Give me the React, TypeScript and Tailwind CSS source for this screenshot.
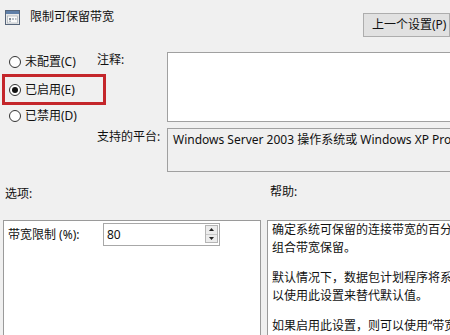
import React from "react";

const Radio = ({ checked, label }: { checked?: boolean; label: string }) => (
  <div className="flex items-center h-[26px] pl-[9px]">
    <span className="w-[12px] h-[12px] rounded-full border border-[#333] bg-white flex items-center justify-center shrink-0">
      {checked && <span className="w-[6px] h-[6px] rounded-full bg-[#111]" />}
    </span>
    <span className="ml-[4px] text-[#111] whitespace-nowrap">{label}</span>
  </div>
);

export default function App() {
  return (
    <div
      className="w-[450px] h-[335px] overflow-hidden bg-[#f0f0f0] text-[12px] leading-[16px] text-[#1a1a1a]"
      style={{ fontFamily: '"Noto Sans", "Noto Sans CJK SC", sans-serif' }}
    >
      {/* header */}
      <div className="flex h-[52px]">
        <div className="flex items-start pt-[10px] pl-[5px]">
          <svg width="15" height="15" viewBox="0 0 15 15" className="shrink-0">
            <rect x="0.5" y="0.5" width="14" height="14" fill="#e8e8e8" stroke="#56657a" />
            <rect x="1" y="1" width="13" height="3" fill="#5f7fa8" />
            <rect x="2.5" y="6" width="10" height="7" fill="#fafafa" stroke="#9aa3ad" strokeWidth="0.6" />
            <rect x="4" y="8" width="2" height="2" fill="#7f8b98" />
            <rect x="7" y="8" width="2" height="2" fill="#b7bec6" />
            <rect x="10" y="8" width="1.5" height="2" fill="#b7bec6" />
            <rect x="4" y="10.5" width="2" height="1.5" fill="#b7bec6" />
          </svg>
          <span className="ml-[10px] mt-[-1px] text-[#111]">限制可保留带宽</span>
        </div>
        <div className="ml-auto pt-[13px] shrink-0">
          <div className="w-[87px] h-[24px] bg-[#e1e1e1] border border-[#adadad] flex items-center pl-[8px] whitespace-nowrap text-[#111]">
            上一个设置(P)
          </div>
        </div>
      </div>

      {/* main settings */}
      <div className="relative flex">
        <div className="w-[97px] shrink-0 flex flex-col mt-[-3px]">
          <Radio label="未配置(C)" />
          <div className="h-[2px]" />
          <Radio checked label="已启用(E)" />
          <Radio label="已禁用(D)" />
        </div>
        <div className="flex flex-col shrink-0">
          <div className="flex">
            <div className="w-[70px] shrink-0 text-[#111]">注释:</div>
            <div className="w-[300px] shrink-0 h-[70px] bg-white border border-[#a0a0a0]" />
          </div>
          <div className="flex mt-[6px]">
            <div className="w-[70px] shrink-0 pt-[1px] text-[#111] whitespace-nowrap">支持的平台:</div>
            <div className="w-[300px] shrink-0 h-[44px] bg-[#f0f0f0] border border-[#a0a0a0] pl-[5px] pt-[3px] whitespace-nowrap overflow-hidden text-[#111]">
              Windows Server 2003 操作系统或 Windows XP Pro
            </div>
          </div>
        </div>
        <div className="absolute left-[2px] top-[22px] w-[104px] h-[31px] border-[3px] border-[#c4262b]" />
      </div>

      {/* section labels */}
      <div className="flex mt-[14px] h-[16px]">
        <div className="w-[267px] shrink-0 pl-[5px] text-[#111]">选项:</div>
        <div className="pl-[3px] mt-[-2px] text-[#111]">帮助:</div>
      </div>

      {/* panels */}
      <div className="flex mt-[18px] pl-[3px]">
        <div className="w-[258px] shrink-0 h-[140px] bg-white border border-[#9a9a9a] pl-[4px] pt-[2px]">
          <div className="flex items-center">
            <div className="w-[95px] shrink-0 text-[#111] whitespace-nowrap">带宽限制 (%):</div>
            <div className="w-[117px] shrink-0 h-[23px] border border-[#a8a8a8] bg-white flex items-center relative">
              <span className="pl-[3px] text-[#111]">80</span>
              <div className="absolute right-[1px] top-[1px] w-[13px] h-[18px] flex flex-col border border-[#b5b5b5] bg-[#ececec]">
                <div className="flex-1 flex items-center justify-center border-b border-[#c8c8c8]">
                  <svg width="5" height="3" viewBox="0 0 5 3"><path d="M0 3 L2.5 0 L5 3 Z" fill="#222" /></svg>
                </div>
                <div className="flex-1 flex items-center justify-center">
                  <svg width="5" height="3" viewBox="0 0 5 3"><path d="M0 0 L2.5 3 L5 0 Z" fill="#222" /></svg>
                </div>
              </div>
            </div>
          </div>
        </div>
        <div className="ml-[6px] w-[200px] shrink-0 h-[140px] bg-white border border-[#9a9a9a] pl-[4px] leading-[18px] whitespace-nowrap overflow-hidden text-[#111]">
          <div>确定系统可保留的连接带宽的百分比</div>
          <div className="mb-[12px]">组合带宽保留。</div>
          <div>默认情况下，数据包计划程序将系统</div>
          <div className="mb-[12px]">以使用此设置来替代默认值。</div>
          <div>如果启用此设置，则可以使用“带宽</div>
        </div>
      </div>
    </div>
  );
}
